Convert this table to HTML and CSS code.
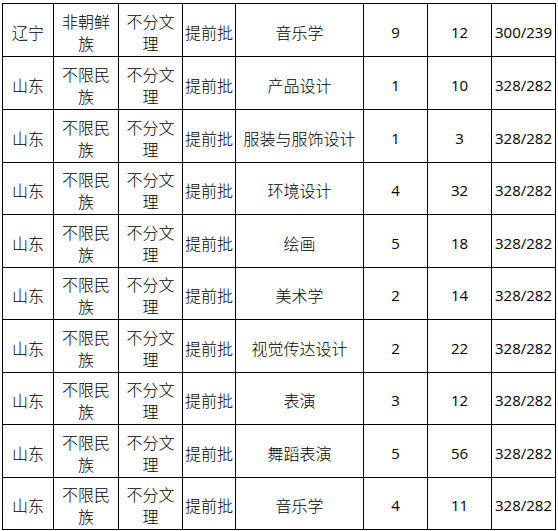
FILE: index.html
```html
<!DOCTYPE html>
<html lang="zh-CN">
<head>
<meta charset="utf-8">
<title>招生计划</title>
<link rel="stylesheet" href="styles.css">
</head>
<body>
<div class="sheet">
  <div class="row r53"><div class="c">辽宁</div><div class="c">非朝鲜族</div><div class="c">不分文理</div><div class="c">提前批</div><div class="c">音乐学</div><div class="c n">9</div><div class="c n">12</div><div class="c n">300/239</div></div>
  <div class="row r53"><div class="c">山东</div><div class="c">不限民族</div><div class="c">不分文理</div><div class="c">提前批</div><div class="c">产品设计</div><div class="c n">1</div><div class="c n">10</div><div class="c n">328/282</div></div>
  <div class="row r53"><div class="c">山东</div><div class="c">不限民族</div><div class="c">不分文理</div><div class="c">提前批</div><div class="c">服装与服饰设计</div><div class="c n">1</div><div class="c n">3</div><div class="c n">328/282</div></div>
  <div class="row r52"><div class="c">山东</div><div class="c">不限民族</div><div class="c">不分文理</div><div class="c">提前批</div><div class="c">环境设计</div><div class="c n">4</div><div class="c n">32</div><div class="c n">328/282</div></div>
  <div class="row r53"><div class="c">山东</div><div class="c">不限民族</div><div class="c">不分文理</div><div class="c">提前批</div><div class="c">绘画</div><div class="c n">5</div><div class="c n">18</div><div class="c n">328/282</div></div>
  <div class="row r52"><div class="c">山东</div><div class="c">不限民族</div><div class="c">不分文理</div><div class="c">提前批</div><div class="c">美术学</div><div class="c n">2</div><div class="c n">14</div><div class="c n">328/282</div></div>
  <div class="row r53"><div class="c">山东</div><div class="c">不限民族</div><div class="c">不分文理</div><div class="c">提前批</div><div class="c">视觉传达设计</div><div class="c n">2</div><div class="c n">22</div><div class="c n">328/282</div></div>
  <div class="row r52"><div class="c">山东</div><div class="c">不限民族</div><div class="c">不分文理</div><div class="c">提前批</div><div class="c">表演</div><div class="c n">3</div><div class="c n">12</div><div class="c n">328/282</div></div>
  <div class="row r53"><div class="c">山东</div><div class="c">不限民族</div><div class="c">不分文理</div><div class="c">提前批</div><div class="c">舞蹈表演</div><div class="c n">5</div><div class="c n">56</div><div class="c n">328/282</div></div>
  <div class="row r52"><div class="c">山东</div><div class="c">不限民族</div><div class="c">不分文理</div><div class="c">提前批</div><div class="c">音乐学</div><div class="c n">4</div><div class="c n">11</div><div class="c n">328/282</div></div>
</div>
</body>
</html>
```
FILE: styles.css
```css
html, body {
  margin: 0;
  padding: 0;
  background: #fff;
}
body {
  padding: 3px 0 0 2px;
  font-family: "Noto Sans CJK SC", "Noto Sans", sans-serif;
  font-size: 16px;
  font-weight: 300;
  color: #000;
}
.sheet {
  display: grid;
  width: 554px;
  box-sizing: border-box;
  border-left: 1px solid #000;
  border-top: 1px solid #000;
}
.row {
  display: grid;
  grid-template-columns: 51px 65px 64px 53px 128px 64px 64px 64px;
}
.r53 { height: 53px; }
.r52 { height: 52px; }
.c {
  box-sizing: border-box;
  border-right: 1px solid #000;
  border-bottom: 1px solid #000;
  display: flex;
  align-items: center;
  justify-content: center;
  text-align: center;
  line-height: 22px;
  padding: 3px 7px 0;
  overflow: hidden;
}
.c:nth-child(1), .c:nth-child(4) { padding-left: 0; padding-right: 0; }
.c:nth-child(5) { padding-left: 2px; padding-right: 2px; }
.n {
  font-family: "Open Sans", "Liberation Sans", sans-serif;
  font-size: 15px;
  font-weight: 400;
  padding-left: 0;
  padding-right: 0;
  white-space: nowrap;
}
```
